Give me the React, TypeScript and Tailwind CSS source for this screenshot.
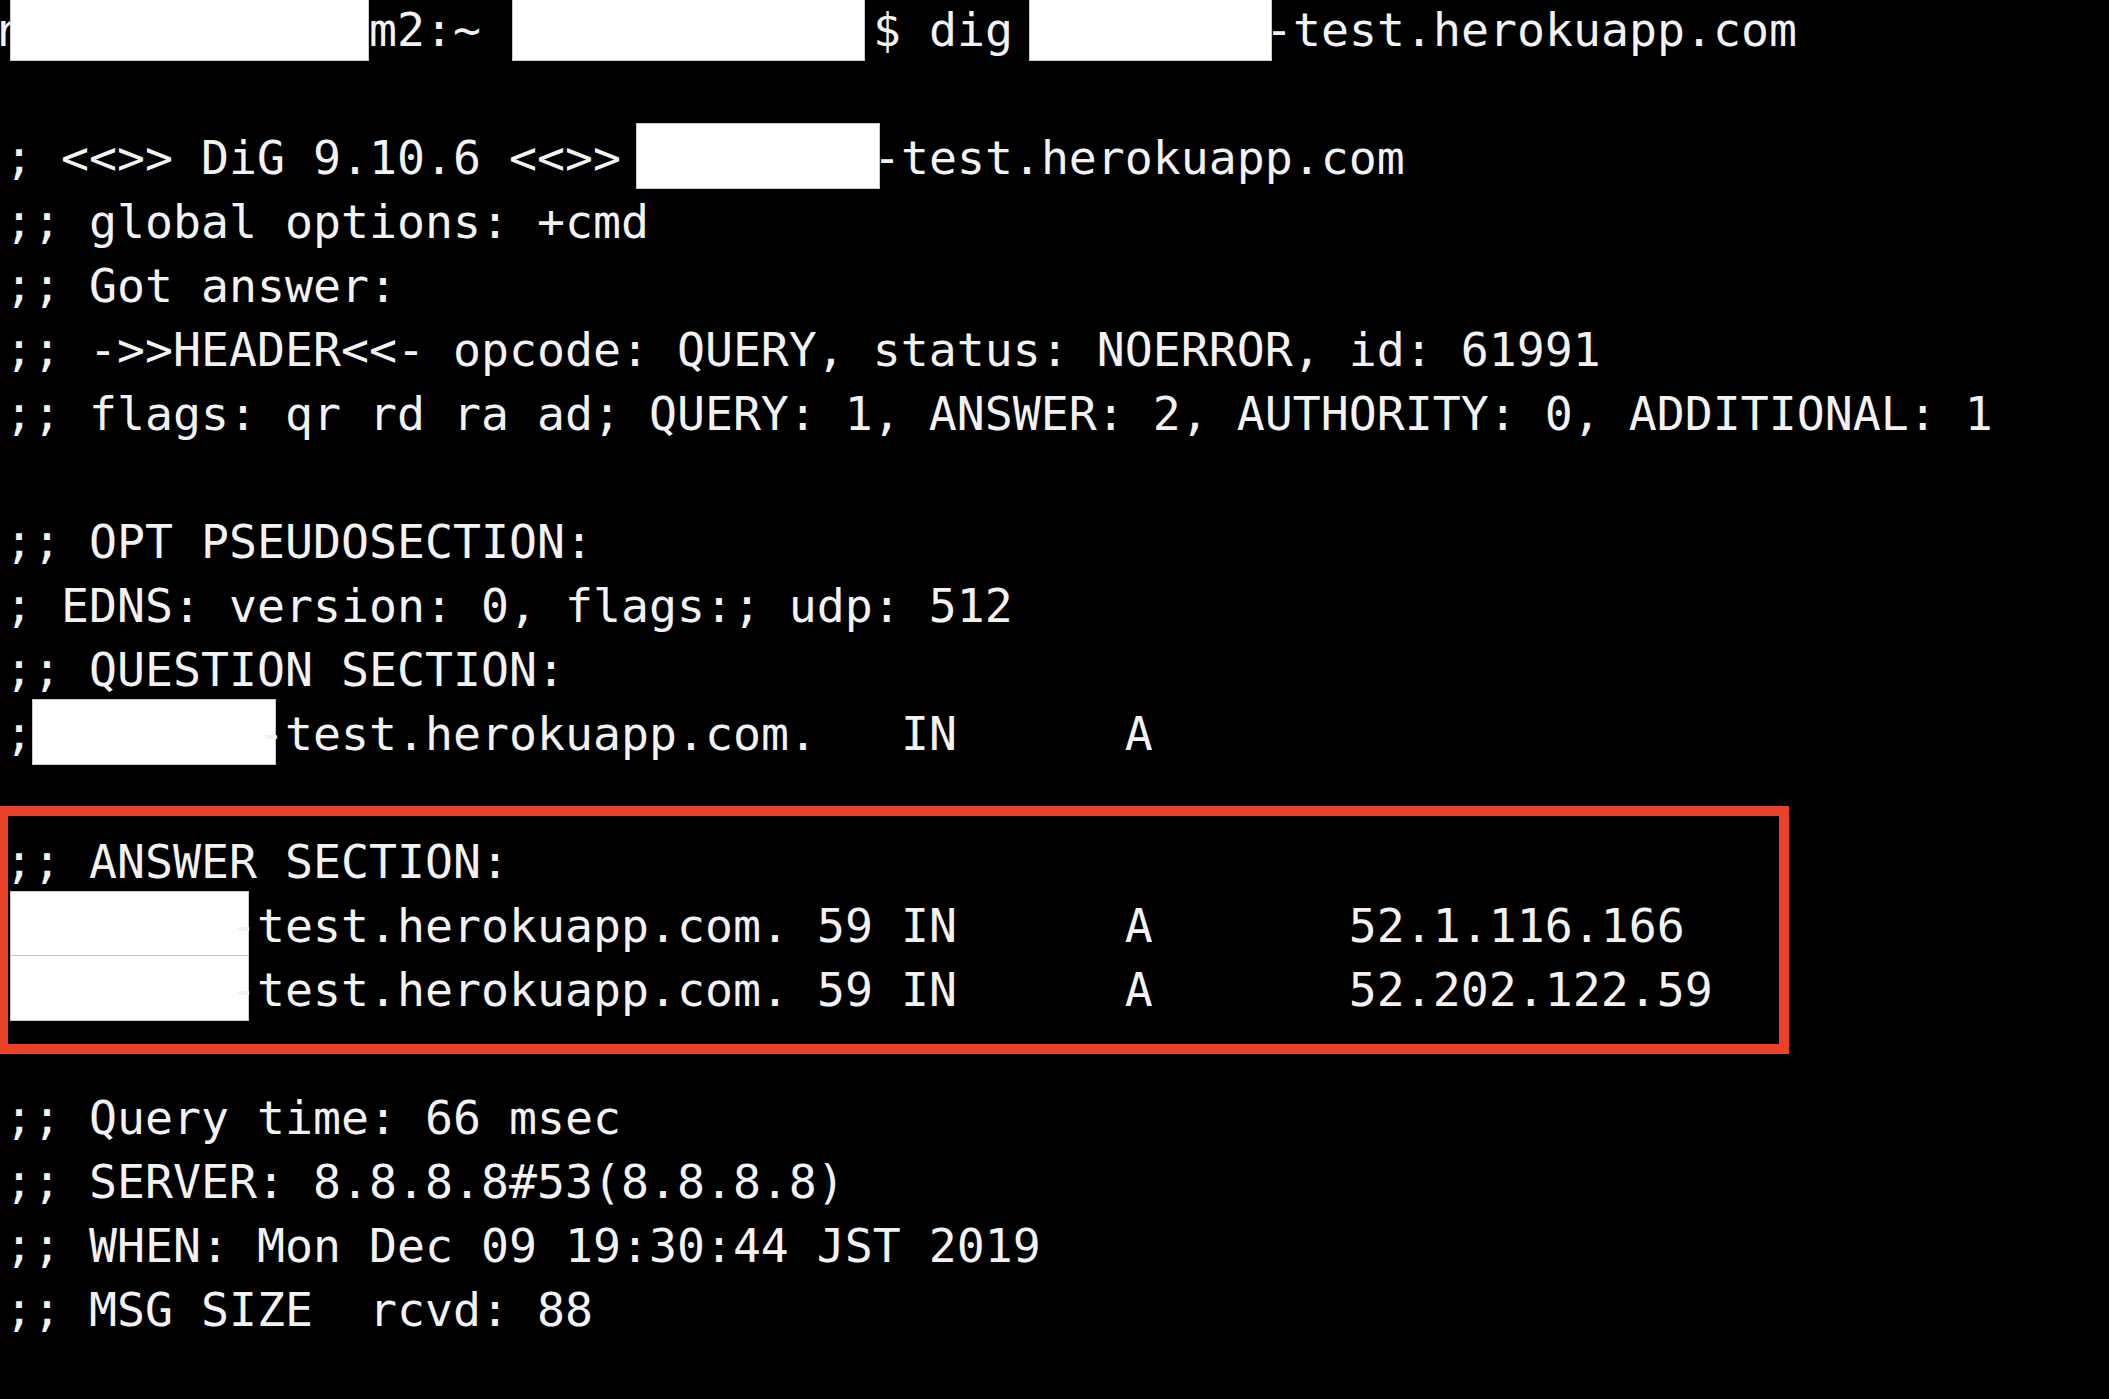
type Part = string | { box: string } | { cut: string; text: string };

// a white bar that hides part of a line (hostnames / user names)
const hide = (box: string): Part => ({ box });

const lines: Part[][] = [
  [{ cut: "ml-[-12px]", text: "r" }, hide("ml-[-11px] w-[359px]"), "m2:~ ", hide("ml-[3px] w-[353px] mr-[8px]"), "$ dig ", hide("ml-[-12px] w-[243px] mr-[-7px]"), "-test.herokuapp.com"],
  [],
  ["; <<>> DiG 9.10.6 <<>> ", hide("ml-[-13px] w-[244px] mr-[-7px]"), "-test.herokuapp.com"],
  [";; global options: +cmd"],
  [";; Got answer:"],
  [";; ->>HEADER<<- opcode: QUERY, status: NOERROR, id: 61991"],
  [";; flags: qr rd ra ad; QUERY: 1, ANSWER: 2, AUTHORITY: 0, ADDITIONAL: 1"],
  [],
  [";; OPT PSEUDOSECTION:"],
  ["; EDNS: version: 0, flags:; udp: 512"],
  [";; QUESTION SECTION:"],
  [";", hide("ml-[-1px] w-[244px] mr-[-19px]"), "-test.herokuapp.com.   IN      A"],
  [],
  [";; ANSWER SECTION:"],
  [hide("ml-[5px] w-[239px] mr-[-20px]"), "-test.herokuapp.com. 59 IN      A       52.1.116.166"],
  [hide("ml-[5px] w-[239px] mr-[-20px]"), "-test.herokuapp.com. 59 IN      A       52.202.122.59"],
  [],
  [";; Query time: 66 msec"],
  [";; SERVER: 8.8.8.8#53(8.8.8.8)"],
  [";; WHEN: Mon Dec 09 19:30:44 JST 2019"],
  [";; MSG SIZE  rcvd: 88"],
];

function Line({ parts }: { parts: Part[] }) {
  return (
    <div className="h-[64px]">
      {parts.map((p, i) => {
        if (typeof p === "string") return <span key={i}>{p}</span>;
        if ("cut" in p)
          return (
            <span key={i} className={`inline-block ${p.cut}`}>
              {p.text}
            </span>
          );
        return (
          <span
            key={i}
            className={`inline-block align-top h-[66px] -mt-[3px] bg-white border border-[#c9c9c9] ${p.box}`}
          />
        );
      })}
    </div>
  );
}

export default function App() {
  return (
    <div className="relative w-full h-[1399px] bg-black overflow-hidden">
      <div
        className="mt-[-2px] pl-[5px] text-[46.5px] leading-[64px] text-[#f2f2f2] whitespace-pre"
        style={{ fontFamily: '"DejaVu Sans Mono", "Liberation Mono", monospace' }}
      >
        {lines.map((parts, i) => (
          <Line key={i} parts={parts} />
        ))}
      </div>

      {/* red highlight drawn over the answer section */}
      <div className="absolute left-[-2px] top-[806px] w-[1791px] h-[248px] border-[10px] border-[#ea4129]" />
    </div>
  );
}
